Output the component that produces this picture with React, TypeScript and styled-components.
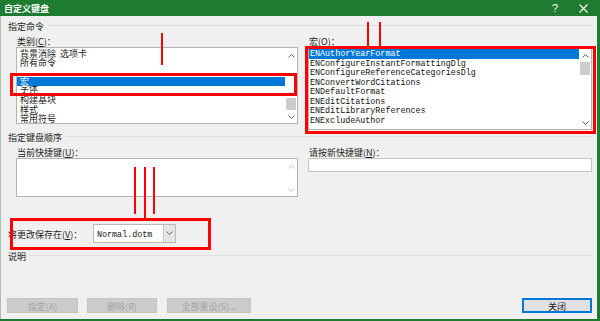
import styled, { createGlobalStyle } from 'styled-components';

const Green = '#1e7b30';
const Red = '#ff0000';
const CJK = `"Noto Sans CJK SC", "Noto Sans", sans-serif`;
const Mono = `"Liberation Mono", "DejaVu Sans Mono", monospace`;

const GlobalStyle = createGlobalStyle`
  html, body { margin: 0; padding: 0; background: #f0f0f0; }
  * { box-sizing: border-box; }
`;

const Dialog = styled.div`
  position: relative;
  width: 600px;
  height: 321px;
  display: flex;
  flex-direction: column;
  background: #f0f0f0;
  border-right: 3px solid ${Green};
  border-bottom: 2px solid ${Green};
  font-family: ${CJK};
  font-size: 9px;
  color: #222;
  overflow: hidden;
`;

const TitleBar = styled.div`
  height: 16px;
  flex: none;
  display: flex;
  align-items: center;
  justify-content: space-between;
  padding: 1px 9px 0 4px;
  background: ${Green};
  color: #fff;
  font-weight: 700;
  line-height: 15px;
`;

const TitleButtons = styled.div`
  display: flex;
  align-items: center;
  gap: 21px;
  font-weight: 400;
  font-family: "Liberation Sans", sans-serif;
  font-size: 11px;
`;

const Body = styled.div`
  flex: 1;
  display: flex;
  flex-direction: column;
  padding: 0 5px 6px 7px;
  border-left: 1px solid #a9c4ac;
`;

const GroupHeader = styled.div<{ $top: number }>`
  display: flex;
  align-items: flex-start;
  gap: 4px;
  height: 12px;
  padding-top: 2px;
  line-height: 12px;
  margin-top: ${(p) => p.$top}px;

  &::after {
    content: '';
    flex: 1;
    height: 1px;
    margin-top: 4px;
    background: #dcdcdc;
  }
`;

const Columns = styled.div`
  display: grid;
  grid-template-columns: 282px 284px;
  column-gap: 10px;
  padding-left: 8px;
  align-items: start;
`;

const Column = styled.div`
  display: flex;
  flex-direction: column;
`;

const Label = styled.div`
  height: 16px;
  padding: 3px 0 0 1px;
  line-height: 16px;
  white-space: nowrap;
`;

const ListBox = styled.div<{ $height: number }>`
  height: ${(p) => p.$height}px;
  display: flex;
  background: #fff;
  border: 1px solid #b4b4b4;
  overflow: hidden;
`;

const Items = styled.div<{ $pad?: number }>`
  flex: 1;
  overflow: hidden;
  padding: ${(p) => p.$pad ?? 0}px 1px 0 0;
`;

const CatItem = styled.div<{ $selected?: boolean; $tuck?: boolean }>`
  position: relative;
  z-index: ${(p) => (p.$selected ? 1 : 0)};
  height: ${(p) => (p.$tuck ? 11.3 : 9.3)}px;
  margin-top: ${(p) => (p.$tuck ? -2 : 0)}px;
  padding-left: 3px;
  line-height: 9.3px;
  white-space: pre;
  background: ${(p) => (p.$selected ? '#0078d7' : 'transparent')};
  color: ${(p) => (p.$selected ? '#fff' : '#222')};
`;

const MacroItem = styled.div<{ $selected?: boolean }>`
  height: 9.57px;
  padding: 1px 0 0 1px;
  line-height: 9.57px;
  font-family: ${Mono};
  font-size: 8.4px;
  white-space: nowrap;
  background: ${(p) => (p.$selected ? '#0078d7' : 'transparent')};
  color: ${(p) => (p.$selected ? '#fff' : '#111')};
`;

const ScrollTrack = styled.div<{ $disabled?: boolean }>`
  width: 11px;
  flex: none;
  position: relative;
  display: flex;
  flex-direction: column;
  justify-content: space-between;
  align-items: center;
  padding: 6px 0 4px;
  color: ${(p) => (p.$disabled ? '#c6c6c6' : '#606060')};
`;

const Thumb = styled.div<{ $top: number; $height: number }>`
  position: absolute;
  left: 0;
  right: 1px;
  top: ${(p) => p.$top}px;
  height: ${(p) => p.$height}px;
  background: #cdcdcd;
`;

const Input = styled.div`
  height: 14px;
  background: #fff;
  border: 1px solid #c4c4c4;
`;

const SaveRow = styled.div`
  display: flex;
  align-items: center;
  margin-top: 26px;
  height: 20px;
`;

const SaveLabel = styled.div`
  width: 85px;
  height: 20px;
  padding-top: 2px;
  line-height: 20px;
  white-space: nowrap;
`;

const Select = styled.div`
  width: 83px;
  height: 19px;
  display: flex;
  background: #fff;
  border: 1px solid #b9b9b9;
`;

const SelectValue = styled.div`
  flex: 1;
  padding: 3px 0 0 3px;
  font-family: ${Mono};
  font-size: 8.4px;
  line-height: 14px;
  color: #111;
`;

const SelectArrow = styled.div`
  width: 12px;
  display: flex;
  align-items: center;
  justify-content: center;
  background: #e6e6e6;
  border-left: 1px solid #c8c8c8;
  color: #606060;
`;

const Spacer = styled.div`
  flex: 1;
`;

const ButtonRow = styled.div`
  display: flex;
  margin-left: -1px;
`;

const Button = styled.div<{ $width: number; $gap?: number; $primary?: boolean; $disabled?: boolean }>`
  width: ${(p) => p.$width}px;
  height: 15px;
  margin-left: ${(p) => p.$gap ?? 0}px;
  padding-top: 1.5px;
  text-align: center;
  background: ${(p) => (p.$disabled ? '#cccccc' : '#e1e1e1')};
  border: 1px solid ${(p) => (p.$primary ? '#0078d7' : p.$disabled ? '#c4c4c4' : '#adadad')};
  color: ${(p) => (p.$disabled ? '#a3a3a3' : '#222')};
  line-height: 12px;
  white-space: nowrap;
  ${(p) => (p.$primary ? 'box-shadow: inset 0 0 0 1px #0078d7;' : '')}
`;

const MarkBox = styled.div<{ $x: number; $y: number; $w: number; $h: number }>`
  position: absolute;
  left: ${(p) => p.$x}px;
  top: ${(p) => p.$y}px;
  width: ${(p) => p.$w}px;
  height: ${(p) => p.$h}px;
  border: 3px solid ${Red};
  pointer-events: none;
`;

const MarkLine = styled.div<{ $x: number; $y: number; $h: number }>`
  position: absolute;
  left: ${(p) => p.$x}px;
  top: ${(p) => p.$y}px;
  width: 2px;
  height: ${(p) => p.$h}px;
  background: ${Red};
  pointer-events: none;
`;

const Chevron = ({ up }: { up?: boolean }) => (
  <svg width="7" height="4" viewBox="0 0 7 4" fill="none" stroke="currentColor" strokeWidth="1">
    <path d={up ? 'M0.5 3.5 L3.5 0.5 L6.5 3.5' : 'M0.5 0.5 L3.5 3.5 L6.5 0.5'} />
  </svg>
);

const ScrollBar = ({ thumb, disabled }: { thumb?: [number, number]; disabled?: boolean }) => (
  <ScrollTrack $disabled={disabled}>
    <Chevron up />
    {thumb && <Thumb $top={thumb[0]} $height={thumb[1]} />}
    <Chevron />
  </ScrollTrack>
);

const categories = ['背景消除  选项卡', '所有命令', ' '];
const categoriesAfter = ['构建基块', '样式', '常用符号'];

const macros = [
  'ENAuthorYearFormat',
  'ENConfigureInstantFormattingDlg',
  'ENConfigureReferenceCategoriesDlg',
  'ENConvertWordCitations',
  'ENDefaultFormat',
  'ENEditCitations',
  'ENEditLibraryReferences',
  'ENExcludeAuthor',
];

export default function App() {
  return (
    <Dialog>
      <GlobalStyle />
      <TitleBar>
        <span>自定义键盘</span>
        <TitleButtons>
          <span>?</span>
          <svg width="9" height="9" viewBox="0 0 9 9" stroke="#fff" strokeWidth="1.1">
            <path d="M0.5 0.5 L8.5 8.5 M8.5 0.5 L0.5 8.5" />
          </svg>
        </TitleButtons>
      </TitleBar>

      <Body>
        <GroupHeader $top={3}>指定命令</GroupHeader>
        <Columns>
          <Column>
            <Label>
              类别(<u>C</u>)：
            </Label>
            <ListBox $height={77}>
              <Items $pad={1}>
                {categories.map((c, i) => (
                  <CatItem key={i}>{c}</CatItem>
                ))}
                <CatItem $selected>宏</CatItem>
                <CatItem $tuck>字体</CatItem>
                {categoriesAfter.map((c) => (
                  <CatItem key={c}>{c}</CatItem>
                ))}
              </Items>
              <ScrollBar thumb={[50, 12]} />
            </ListBox>
          </Column>
          <Column>
            <Label>
              宏(<u>O</u>)：
            </Label>
            <ListBox $height={83}>
              <Items $pad={1}>
                {macros.map((m, i) => (
                  <MacroItem key={m} $selected={i === 0}>
                    {m}
                  </MacroItem>
                ))}
              </Items>
              <ScrollBar thumb={[14, 13]} />
            </ListBox>
          </Column>
        </Columns>

        <GroupHeader $top={0}>指定键盘顺序</GroupHeader>
        <Columns>
          <Column>
            <Label>
              当前快捷键(<u>U</u>)：
            </Label>
            <ListBox $height={39}>
              <Items />
              <ScrollBar disabled />
            </ListBox>
          </Column>
          <Column>
            <Label>
              请按新快捷键(<u>N</u>)：
            </Label>
            <Input />
          </Column>
        </Columns>

        <SaveRow>
          <SaveLabel>
            将更改保存在(<u>V</u>)：
          </SaveLabel>
          <Select>
            <SelectValue>Normal.dotm</SelectValue>
            <SelectArrow>
              <Chevron />
            </SelectArrow>
          </Select>
        </SaveRow>

        <GroupHeader $top={6}>说明</GroupHeader>
        <Spacer />

        <ButtonRow>
          <Button $width={71} $disabled>
            指定(A)
          </Button>
          <Button $width={70} $gap={9} $disabled>
            删除(R)
          </Button>
          <Button $width={84} $gap={10} $disabled>
            全部重设(S)...
          </Button>
          <Spacer />
          <Button $width={70} $primary>
            关闭
          </Button>
        </ButtonRow>
      </Body>

      <MarkBox $x={10} $y={73} $w={287} $h={23} />
      <MarkLine $x={161} $y={33} $h={32} />
      <MarkBox $x={305} $y={46} $w={291} $h={88} />
      <MarkLine $x={367} $y={22} $h={24} />
      <MarkLine $x={379} $y={22} $h={24} />
      <MarkBox $x={10} $y={218} $w={201} $h={32} />
      <MarkLine $x={134} $y={167} $h={47} />
      <MarkLine $x={144} $y={167} $h={52} />
      <MarkLine $x={153} $y={167} $h={47} />
    </Dialog>
  );
}
